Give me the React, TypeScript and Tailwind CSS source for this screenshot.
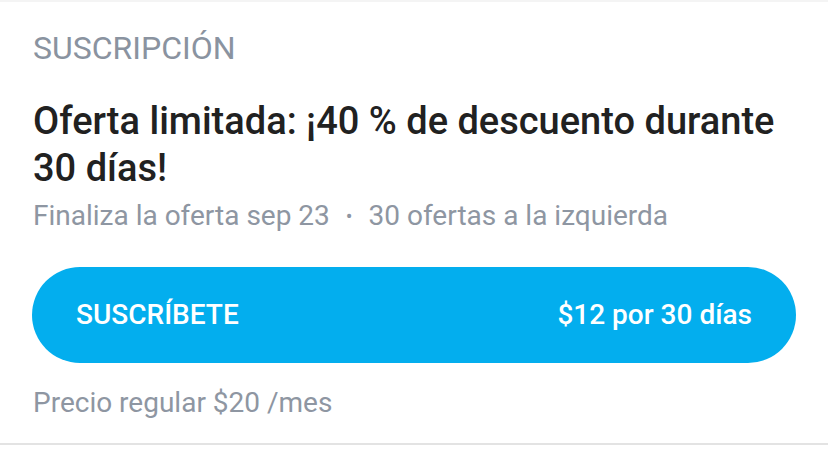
export default function App() {
  return (
    <div className="w-[828px] h-[460px] bg-white overflow-hidden font-['Roboto',sans-serif]">
      <div className="h-[2px] bg-[#f4f4f4]" />
      <div className="px-[33px] pt-[26px]">
        <div className="text-[32px] leading-[40px] text-[#8a93a0]">SUSCRIPCIÓN</div>
        <h1 className="mt-[30px] text-[38px] leading-[47px] font-medium text-[#212121]">
          Oferta limitada: ¡40 % de descuento durante 30 días!
        </h1>
        <div className="mt-[6px] flex items-center text-[28px] leading-[36px] text-[#8e96a2]">
          <span>Finaliza la oferta sep 23</span>
          <span className="mx-[16px] text-[20px]">•</span>
          <span>30 ofertas a la izquierda</span>
        </div>
        <button className="mt-[33px] w-[764px] h-[96px] -ml-[1px] rounded-full bg-[#03aeee] flex items-center justify-between px-[44px] text-white text-[28px] font-medium">
          <span>SUSCRÍBETE</span>
          <span>$12 por 30 días</span>
        </button>
        <div className="mt-[22px] text-[28px] leading-[36px] text-[#8e96a2]">Precio regular $20 /mes</div>
      </div>
      <div className="mt-[22px] h-[2px] bg-[#e3e3e3]" />
    </div>
  );
}
